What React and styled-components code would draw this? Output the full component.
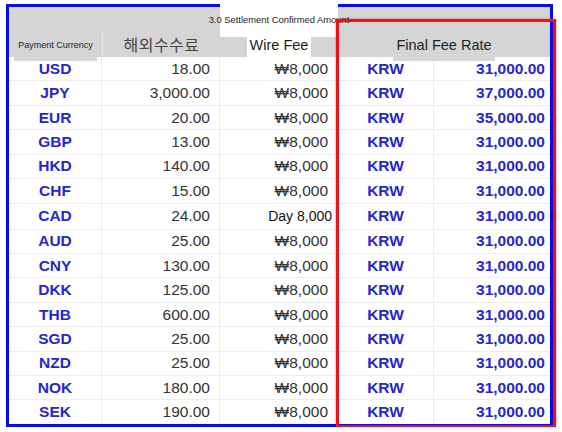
import React from 'react';
import styled, { createGlobalStyle } from 'styled-components';

const GlobalStyle = createGlobalStyle`
    body {
        margin: 0;
        background: #ffffff;
        font-family: "Liberation Sans", Arial, sans-serif;
    }
`

const rows = [
    ['USD', '18.00', '₩8,000', '31,000.00'],
    ['JPY', '3,000.00', '₩8,000', '37,000.00'],
    ['EUR', '20.00', '₩8,000', '35,000.00'],
    ['GBP', '13.00', '₩8,000', '31,000.00'],
    ['HKD', '140.00', '₩8,000', '31,000.00'],
    ['CHF', '15.00', '₩8,000', '31,000.00'],
    ['CAD', '24.00', 'Day 8,000', '31,000.00'],
    ['AUD', '25.00', '₩8,000', '31,000.00'],
    ['CNY', '130.00', '₩8,000', '31,000.00'],
    ['DKK', '125.00', '₩8,000', '31,000.00'],
    ['THB', '600.00', '₩8,000', '31,000.00'],
    ['SGD', '25.00', '₩8,000', '31,000.00'],
    ['NZD', '25.00', '₩8,000', '31,000.00'],
    ['NOK', '180.00', '₩8,000', '31,000.00'],
    ['SEK', '190.00', '₩8,000', '31,000.00'],
]

export default function App() {
    return (
        <>
            <GlobalStyle />
            <Frame>
                <TitleBand>
                    <TitleBox>3.0 Settlement Confirmed Amount</TitleBox>
                </TitleBand>
                <HeadRow>
                    <HeadCell>
                        <HeadLabel small>Payment Currency</HeadLabel>
                    </HeadCell>
                    <HeadCell divider>
                        <KoreanLabel>해외수수료</KoreanLabel>
                    </HeadCell>
                    <HeadCell>
                        <HeadLabel white>Wire Fee</HeadLabel>
                    </HeadCell>
                    <HeadCell span={2}>
                        <HeadLabel>Final Fee Rate</HeadLabel>
                    </HeadCell>
                </HeadRow>
                <Body>
                    {rows.map(([code, fee, wire, total]) => (
                        <Row key={code}>
                            <Cell align='center'><Code>{code}</Code></Cell>
                            <Cell align='flex-end' pad='9px'><Num>{fee}</Num></Cell>
                            <Cell align='flex-end' pad={wire.startsWith('Day') ? '2px' : '9px'}>
                                {wire.startsWith('Day')
                                    ? <DayBox>{wire}</DayBox>
                                    : <Num>{wire}</Num>}
                            </Cell>
                            <Cell align='center'><Code>KRW</Code></Cell>
                            <Cell align='flex-end' pad='5px' last><Code>{total}</Code></Cell>
                        </Row>
                    ))}
                </Body>
                <RedMark />
            </Frame>
        </>
    )
}

const columns = '93px 118px 118px 96px 116px';

const Frame = styled.div`
    position: relative;
    box-sizing: border-box;
    margin: 4px 0 0 6px;
    width: 547px;
    height: 423px;
    border: 3px solid #0b0be6;
    background: #ffffff;
`

const TitleBand = styled.div`
    position: relative;
    height: 23px;
    background: #d5d5d5;
`

const TitleBox = styled.div`
    position: absolute;
    left: 211px;
    top: -3px;
    width: 118px;
    height: 33px;
    background: #ffffff;
    display: flex;
    justify-content: center;
    padding-top: 10px;
    box-sizing: border-box;
    white-space: nowrap;
    font-size: 9.4px;
    color: #222;
    z-index: 2;
`

const HeadRow = styled.div`
    display: grid;
    grid-template-columns: ${columns};
    height: 27px;
    background: #d5d5d5;
`

const HeadCell = styled.div`
    grid-column: span ${props => props.span || 1};
    display: flex;
    justify-content: center;
    align-items: flex-end;
    border-left: ${props => props.divider ? '1px solid #e6e6e6' : 'none'};
`

const HeadLabel = styled.span`
    position: relative;
    z-index: 1;
    margin-bottom: -3px;
    height: 31px;
    line-height: 31px;
    padding: 0 ${props => props.small ? '4px' : '3px'};
    background: ${props => props.white ? '#fffffb' : '#d5d5d5'};
    font-size: ${props => props.small ? '9px' : '14.5px'};
    color: #1e1e1e;
    white-space: nowrap;
`

const KoreanLabel = styled.span`
    font-family: "Noto Sans CJK KR", sans-serif;
    font-size: 16px;
    line-height: 27px;
    color: #444;
    letter-spacing: 0.5px;
`

const Body = styled.div`
    display: flex;
    flex-direction: column;
    height: 367px;
`

const Row = styled.div`
    flex: 1;
    display: grid;
    grid-template-columns: ${columns};
    border-bottom: 1px solid #ededed;
    &:last-child { border-bottom: none; }
`

const Cell = styled.div`
    display: flex;
    align-items: center;
    justify-content: ${props => props.align};
    padding-right: ${props => props.pad || 0};
    border-right: ${props => props.last ? 'none' : '1px solid #ededed'};
    overflow: visible;
`

const Code = styled.span`
    font-size: 15.5px;
    font-weight: bold;
    color: #2626cc;
`

const Num = styled.span`
    font-size: 15.5px;
    color: #333;
`

const DayBox = styled.span`
    background: #ffffff;
    height: 25px;
    line-height: 25px;
    padding: 0 3px 0 6px;
    font-size: 14px;
    color: #111;
    position: relative;
    z-index: 1;
`

const RedMark = styled.div`
    position: absolute;
    left: 327px;
    top: 12px;
    width: 220px;
    height: 409px;
    box-sizing: border-box;
    border: 3px solid #ee1218;
    box-shadow: 0 0 2px rgba(240, 20, 30, 0.6);
    pointer-events: none;
    z-index: 3;
`
